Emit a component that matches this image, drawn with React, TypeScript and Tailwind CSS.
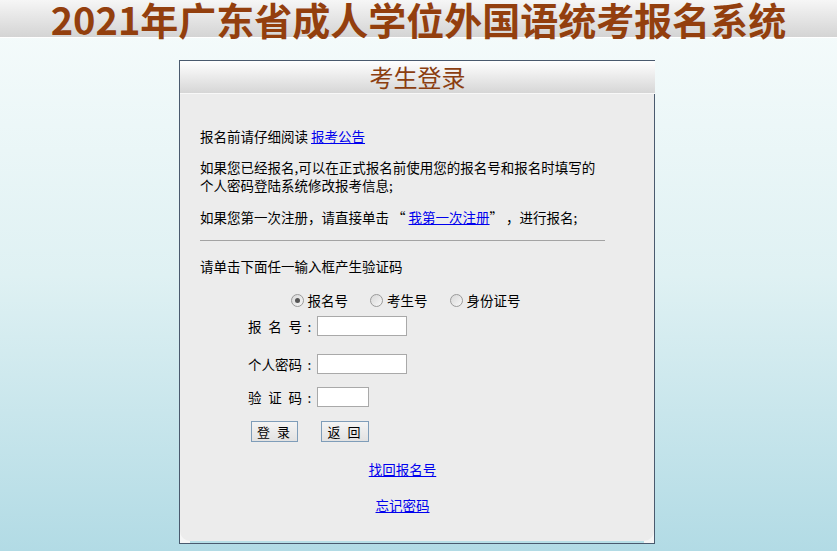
import React from 'react';

const Radio = ({ checked, label }: { checked?: boolean; label: string }) => (
  <label className="flex items-center gap-[4px]">
    <span className="flex h-[13px] w-[13px] items-center justify-center rounded-full border border-[#9a9a9a] bg-gradient-to-br from-[#d8d8d8] to-[#f7f7f7]">
      {checked && <span className="h-[5px] w-[5px] rounded-full bg-[#555]" />}
    </span>
    <span>{label}</span>
  </label>
);

const FieldLabel = ({ chars }: { chars: string[] }) => (
  <div className="flex w-[69px] items-center">
    <span className="flex w-[54px] justify-between">
      {chars.map((c) => (
        <span key={c}>{c}</span>
      ))}
    </span>
    <span className="w-[15px] text-center">:</span>
  </div>
);

export default function App() {
  return (
    <div className="min-h-screen bg-gradient-to-b from-[#f7fcfc] via-[#dff1f3] to-[#b2dbe5] font-['Noto_Sans_CJK_SC','Liberation_Sans',sans-serif] text-[13.5px] text-black">
      {/* Title band */}
      <div className="h-[38px] border-b border-white bg-gradient-to-b from-[#f6f6f6] to-[#d4d4d4]">
        <h1 className="text-center text-[38px] font-bold leading-[38px] text-[#933f0e]">
          2021年广东省成人学位外国语统考报名系统
        </h1>
      </div>

      {/* Login card */}
      <div className="mt-[22px] ml-[179px] w-[476px] border border-[#4a5a6e] bg-[#f6f6f6]">
        <div className="-mr-px h-[33px] border-b border-[#f8f8f8] bg-gradient-to-b from-white to-[#d6d6d6] text-center text-[24px] leading-[32px] text-[#8b3e10]">
          考生登录
        </div>

        <div className="rounded-b-[10px] bg-[#ececec] pl-[20px] pt-[33px] pb-[27px]">
          <div className="w-[405px] leading-[18px]">
            <p>
              报名前请仔细阅读{' '}
              <a href="#" className="text-[#0000ee] underline">
                报考公告
              </a>
            </p>
            <p className="mt-[13px] w-[420px]">
              如果您已经报名,可以在正式报名前使用您的报名号和报名时填写的
              <br />
              个人密码登陆系统修改报考信息;
            </p>
            <p className="mt-[14px]">
              如果您第一次注册，请直接单击 “{' '}
              <a href="#" className="text-[#0000ee] underline">
                我第一次注册
              </a>
              ” ，进行报名;
            </p>
            <div className="mt-[14px] h-px bg-[#a3a3a3]" />
            <p className="mt-[16px]">请单击下面任一输入框产生验证码</p>

            <div className="mt-[16px] flex justify-center gap-[22px] pl-[6px]">
              <Radio checked label="报名号" />
              <Radio label="考生号" />
              <Radio label="身份证号" />
            </div>

            <div className="ml-[48px]">
              <div className="mt-[7px] flex items-center">
                <FieldLabel chars={['报', '名', '号']} />
                <input type="text" className="h-[20px] w-[90px] border border-[#a9a9a9] bg-white" />
              </div>
              <div className="mt-[18px] flex items-center">
                <FieldLabel chars={['个', '人', '密', '码']} />
                <input type="password" className="h-[20px] w-[90px] border border-[#a9a9a9] bg-white" />
              </div>
              <div className="mt-[13px] flex items-center">
                <FieldLabel chars={['验', '证', '码']} />
                <input type="text" className="h-[20px] w-[52px] border border-[#a9a9a9] bg-white" />
              </div>
              <div className="mt-[14px] ml-[3px] flex gap-[23px]">
                <button className="h-[21px] w-[47px] border border-[#7f9db9] bg-gradient-to-b from-[#f4f4f4] to-[#e2e2e2] text-[13px] leading-[19px] tracking-[2px]">
                  登 录
                </button>
                <button className="h-[21px] w-[48px] border border-[#7f9db9] bg-gradient-to-b from-[#f4f4f4] to-[#e2e2e2] text-[13px] leading-[19px] tracking-[2px]">
                  返 回
                </button>
              </div>
            </div>

            <div className="mt-[18px] text-center">
              <a href="#" className="text-[#0000ee] underline">
                找回报名号
              </a>
            </div>
            <div className="mt-[18px] text-center">
              <a href="#" className="text-[#0000ee] underline">
                忘记密码
              </a>
            </div>
          </div>
        </div>
        <div className="h-[2px] px-[10px]">
          <div className="h-full bg-[#b8dfe7]" />
        </div>
      </div>
    </div>
  );
}
